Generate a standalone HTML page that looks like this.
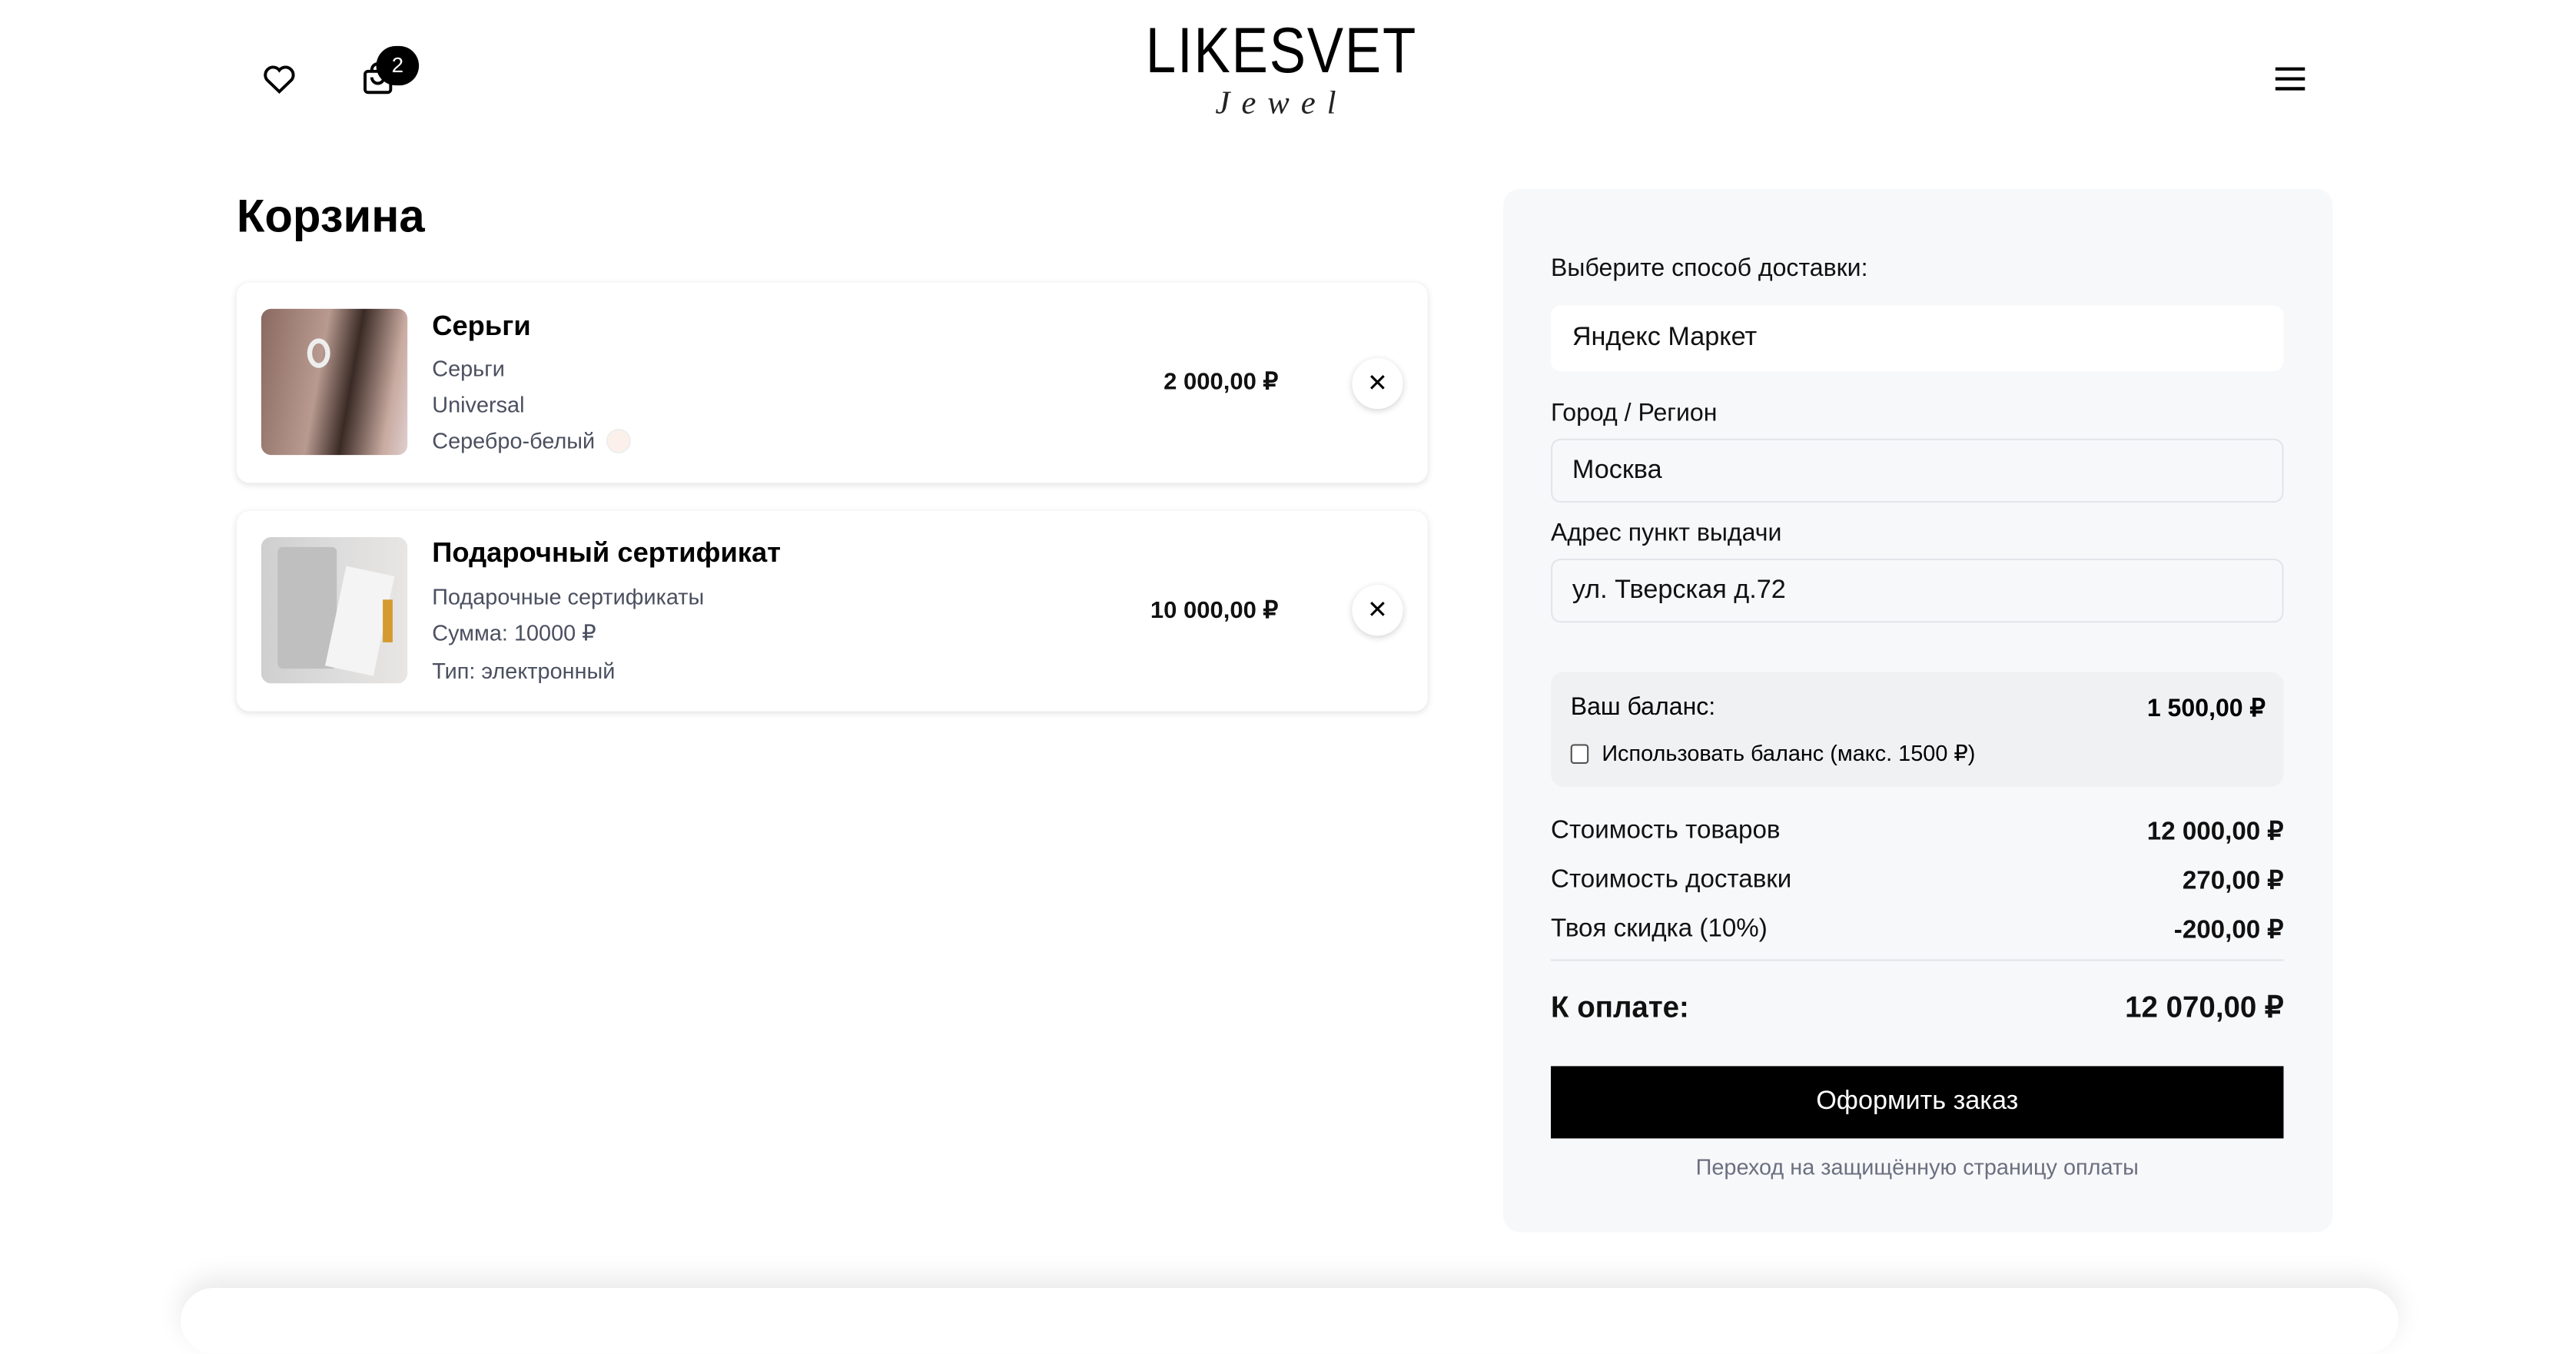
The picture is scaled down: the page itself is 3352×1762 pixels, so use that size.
<!DOCTYPE html>
<html><head><meta charset="utf-8">
<style>
*{box-sizing:border-box;margin:0;padding:0}
html,body{width:3352px;height:1678px;overflow:hidden;background:#fff}
#w{position:absolute;left:0;top:0;width:1568px;height:785px;transform:scale(2.13776);transform-origin:0 0;font-family:"Liberation Sans",sans-serif;color:#000}
.a{position:absolute;white-space:nowrap}
.card{position:absolute;left:144px;width:725px;height:122px;background:#fff;border-radius:8px;box-shadow:0 1px 4px rgba(0,0,0,.12)}
.img{position:absolute;left:15px;top:16px;width:89px;height:89px;border-radius:6px;overflow:hidden}
.t{position:absolute;left:119px;font-size:17px;font-weight:bold}
.s{position:absolute;left:119px;font-size:13.5px;color:#4b5060}
.p{position:absolute;right:91px;font-size:14.5px;font-weight:bold;color:#111}
.x{position:absolute;left:679px;width:31px;height:31px;border-radius:50%;background:#fff;box-shadow:0 1px 4px rgba(0,0,0,.18);text-align:center;line-height:31px;font-size:15px}
.lbl{position:absolute;left:29px;font-size:15px;color:#111}
.inp{position:absolute;left:29px;width:446px;height:39px;border:1px solid #e3e5e9;border-radius:6px;background:#f7f8fa;font-size:16px;padding-left:12px;line-height:37px;color:#111}
.row{position:absolute;left:29px;width:446px;font-size:15.5px;color:#111}
.row b{float:right;font-weight:bold}
</style></head><body><div id="w">
<svg class="a" style="left:159px;top:37px" width="22" height="22" viewBox="0 0 24 24" fill="none" stroke="#000" stroke-width="2"><path d="M12 20.5 3.8 12.6A5 5 0 0 1 12 6.3a5 5 0 0 1 8.2 6.3Z"/></svg>
<svg class="a" style="left:219px;top:37px" width="22" height="22" viewBox="0 0 24 24" fill="none" stroke="#000" stroke-width="2"><rect x="3.5" y="7" width="17" height="14" rx="2"/><path d="M8 7V6a4 4 0 0 1 8 0v1M8 11a4 4 0 0 0 8 0"/></svg>
<div class="a" style="left:229px;top:28px;width:26px;height:24px;border-radius:12px;background:#000;color:#fff;font-size:13px;text-align:center;line-height:24px">2</div>
<div class="a" style="left:680px;top:10px;width:200px;text-align:center;font-size:39px;letter-spacing:1px;transform:scaleX(.85)">LIKESVET</div>
<div class="a" style="left:720px;top:52px;width:120px;text-align:center;font-family:'Liberation Serif',serif;font-style:italic;font-size:20px;letter-spacing:7px;color:#222">Jewel</div>
<svg class="a" style="left:1383px;top:38px" width="22" height="20" viewBox="0 0 22 20" stroke="#000" stroke-width="2"><path d="M2 4h18M2 10h18M2 16h18"/></svg>
<div class="a" style="left:144px;top:116px;font-size:28px;font-weight:bold">Корзина</div>

<div class="card" style="top:172px">
<div class="img" style="background:linear-gradient(100deg,#8a6a60 0%,#b89a90 40%,#3a2a25 60%,#c8aaa0 85%,#e0d0d0 100%)"><div style="position:absolute;left:28px;top:18px;width:14px;height:18px;border:3px solid #eee;border-radius:50%"></div></div>
<div class="t" style="top:17px">Серьги</div>
<div class="s" style="top:45px">Серьги</div>
<div class="s" style="top:67px">Universal</div>
<div class="s" style="top:89px">Серебро-белый <span style="display:inline-block;width:15px;height:15px;border-radius:50%;background:#fbf1ea;border:1px solid #eee;vertical-align:-3px;margin-left:3px"></span></div>
<div class="p" style="top:53px">2 000,00 ₽</div>
<div class="x" style="top:46px">✕</div>
</div>

<div class="card" style="top:311px">
<div class="img" style="background:linear-gradient(90deg,#cfcfcf,#dcdcdc 50%,#e8e6e4)"><div style="position:absolute;left:10px;top:6px;width:36px;height:74px;background:#bfbfbf;border-radius:3px"></div><div style="position:absolute;left:45px;top:20px;width:30px;height:62px;background:#f4f4f4;transform:rotate(12deg)"></div><div style="position:absolute;left:74px;top:38px;width:6px;height:26px;background:#d59a30"></div></div>
<div class="t" style="top:16px">Подарочный сертификат</div>
<div class="s" style="top:45px">Подарочные сертификаты</div>
<div class="s" style="top:67px">Сумма: 10000 ₽</div>
<div class="s" style="top:90px">Тип: электронный</div>
<div class="p" style="top:53px">10 000,00 ₽</div>
<div class="x" style="top:45px">✕</div>
</div>

<div class="a" style="left:915px;top:115px;width:505px;height:635px;background:#f7f8fa;border-radius:10px">
<div class="lbl" style="top:40px">Выберите способ доставки:</div>
<div class="inp" style="top:71px;background:#fff;border-color:#fff;height:40px">Яндекс Маркет</div>
<div class="lbl" style="top:128px">Город / Регион</div>
<div class="inp" style="top:152px">Москва</div>
<div class="lbl" style="top:201px">Адрес пункт выдачи</div>
<div class="inp" style="top:225px">ул. Тверская д.72</div>
<div class="a" style="left:29px;top:294px;width:446px;height:70px;background:#f0f1f3;border-radius:8px">
<div class="a" style="left:12px;top:13px;font-size:15px">Ваш баланс:</div>
<div class="a" style="right:11px;top:13px;font-size:15px;font-weight:bold">1 500,00 ₽</div>
<div class="a" style="left:12px;top:44px;width:11px;height:12px;border:1px solid #555;border-radius:2px;background:#fff"></div>
<div class="a" style="left:31px;top:42px;font-size:13.5px">Использовать баланс (макс. 1500 ₽)</div>
</div>
<div class="row" style="top:382px">Стоимость товаров<b>12 000,00 ₽</b></div>
<div class="row" style="top:412px">Стоимость доставки<b>270,00 ₽</b></div>
<div class="row" style="top:442px">Твоя скидка (10%)<b>-200,00 ₽</b></div>
<div class="a" style="left:29px;top:469px;width:446px;height:1px;background:#e2e4e8"></div>
<div class="row" style="top:488px;font-size:18px;font-weight:bold">К оплате:<b>12 070,00 ₽</b></div>
<div class="a" style="left:29px;top:534px;width:446px;height:44px;background:#000;color:#fff;font-size:16px;text-align:center;line-height:44px">Оформить заказ</div>
<div class="a" style="left:29px;top:588px;width:446px;text-align:center;font-size:13.5px;color:#6b7080">Переход на защищённую страницу оплаты</div>
</div>
<div class="a" style="left:110px;top:784px;width:1350px;height:40px;background:#fff;box-shadow:0 -6px 16px rgba(0,0,0,.09);border-radius:20px"></div>
</div></body></html>
